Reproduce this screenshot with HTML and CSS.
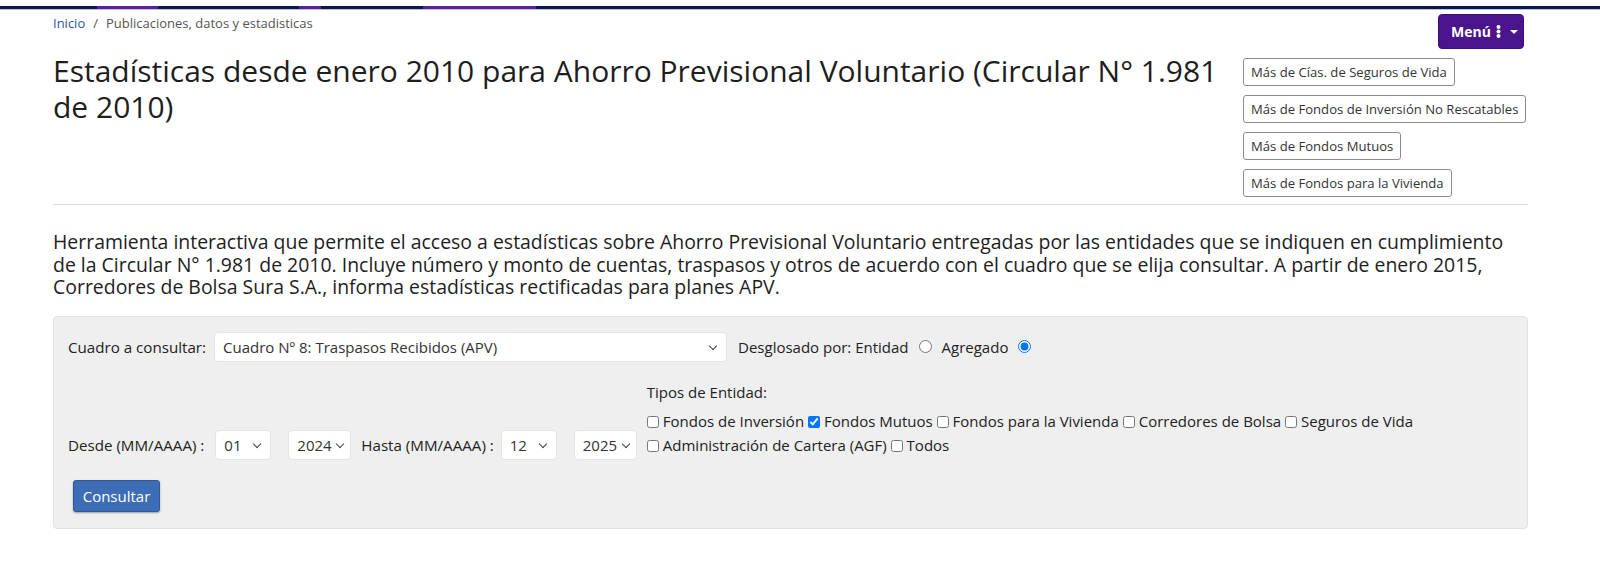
FILE: index.html
```html
<!DOCTYPE html>
<html lang="es">
<head>
<meta charset="utf-8">
<title>Estadísticas APV</title>
<link rel="stylesheet" href="styles.css">
</head>
<body>
<div class="topbar"><div class="topbar-line"></div></div>
<div class="page">
  <div class="top-row">
    <nav class="breadcrumb"><a href="#">Inicio</a><span class="sep">/</span><span>Publicaciones, datos y estadisticas</span></nav>
    <button class="menu-btn" type="button"><span class="menu-text">Menú</span><svg class="dots" width="5" height="13" viewBox="0 0 5 13"><circle cx="2.5" cy="2" r="2" fill="#fff"/><circle cx="2.5" cy="6.5" r="2" fill="#fff"/><circle cx="2.5" cy="11" r="2" fill="#fff"/></svg><span class="caret"></span></button>
  </div>
  <div class="header-row">
    <h1 class="title">Estadísticas desde enero 2010 para Ahorro Previsional Voluntario (Circular N° 1.981 de 2010)</h1>
    <div class="more-links">
      <button class="more-btn" type="button">Más de Cías. de Seguros de Vida</button>
      <button class="more-btn" type="button">Más de Fondos de Inversión No Rescatables</button>
      <button class="more-btn" type="button">Más de Fondos Mutuos</button>
      <button class="more-btn" type="button">Más de Fondos para la Vivienda</button>
    </div>
  </div>
  <hr class="divider">
  <p class="intro">Herramienta interactiva que permite el acceso a estadísticas sobre Ahorro Previsional Voluntario entregadas por las entidades que se indiquen en cumplimiento de la Circular N° 1.981 de 2010. Incluye número y monto de cuentas, traspasos y otros de acuerdo con el cuadro que se elija consultar. A partir de enero 2015, Corredores de Bolsa Sura S.A., informa estadísticas rectificadas para planes APV.</p>
  <form class="panel">
    <div class="row-1">
      <label class="lbl lbl-cuadro">Cuadro a consultar:</label>
      <span class="sel sel-cuadro"><select><option>Cuadro Nº 8: Traspasos Recibidos (APV)</option></select></span>
      <span class="desglose">Desglosado por: Entidad<input type="radio" name="d" class="radio"><span>Agregado</span><input type="radio" name="d" class="radio" checked></span>
    </div>
    <div class="row-2">
      <div class="dates">
        <label class="lbl">Desde (MM/AAAA) :</label>
        <span class="sel sel-mm m-desde-mm"><select><option>01</option></select></span>
        <span class="sel sel-yy m-desde-yy"><select><option>2024</option></select></span>
        <label class="lbl m-hasta">Hasta (MM/AAAA) :</label>
        <span class="sel sel-mm m-hasta-mm"><select><option>12</option></select></span>
        <span class="sel sel-yy m-hasta-yy"><select><option>2025</option></select></span>
      </div>
      <div class="tipos">
        <div class="tipos-title">Tipos de Entidad:</div>
        <div class="checks"><span class="chk"><input type="checkbox"><label>Fondos de Inversión</label></span> <span class="chk"><input type="checkbox" checked><label>Fondos Mutuos</label></span> <span class="chk"><input type="checkbox"><label>Fondos para la Vivienda</label></span> <span class="chk"><input type="checkbox"><label>Corredores de Bolsa</label></span> <span class="chk"><input type="checkbox"><label>Seguros de Vida</label></span> <span class="chk"><input type="checkbox"><label>Administración de Cartera (AGF)</label></span> <span class="chk"><input type="checkbox"><label>Todos</label></span></div>
      </div>
    </div>
    <button class="btn-consultar" type="button">Consultar</button>
  </form>
</div>
</body>
</html>
```

FILE: styles.css
```css
* { box-sizing: border-box; }
html, body { margin: 0; padding: 0; background: #fff; }
body {
  font-family: "Open Sans", "Noto Sans", "Liberation Sans", sans-serif;
  color: #222;
  font-size: 15px;
}

.topbar { padding-top: 6px; }
.topbar-line {
  height: 4px;
  border-bottom: 1px solid #b9c3dc;
  background: linear-gradient(to right,
    #0b1848 0, #0b1848 97px,
    #5a1f9a 97px, #5a1f9a 158px,
    #0b1848 158px, #0b1848 299px,
    #5a1f9a 299px, #5a1f9a 321px,
    #0b1848 321px, #0b1848 423px,
    #5a1f9a 423px, #5a1f9a 536px,
    #0b1848 536px, #0b1848 100%);
}

.page { margin-left: 53px; width: 1475px; }

.top-row {
  display: flex;
  justify-content: space-between;
  align-items: flex-start;
  padding-top: 4px;
  height: 40px;
}
.breadcrumb { font-size: 13px; line-height: 19px; color: #555; }
.breadcrumb a { color: #2b5797; text-decoration: none; }
.breadcrumb .sep { margin: 0 8px 0 8px; color: #555; }

.menu-btn {
  display: flex;
  align-items: center;
  height: 35px;
  width: 86px;
  margin-right: 4px;
  padding: 0 0 0 12px;
  background: #4a148c;
  border: 1px solid #3d0f77;
  border-radius: 4px;
  color: #fff;
  font-family: "Open Sans", sans-serif;
  font-weight: 700;
  font-size: 14px;
}
.menu-text { margin-right: 5px; }
.dots { display: block; }
.caret {
  margin-left: 9px;
  width: 0; height: 0;
  border-left: 4px solid transparent;
  border-right: 4px solid transparent;
  border-top: 4px solid #fff;
}

.header-row { display: flex; align-items: flex-start; }
.title {
  flex: 0 0 1190px;
  margin: 0;
  padding: 3px 14px 0 0;
  font-size: 30px;
  font-weight: 400;
  line-height: 36px;
  color: #1e1e1e;
}
.more-links {
  display: flex;
  flex-direction: column;
  align-items: flex-start;
  gap: 9px;
  padding-top: 8px;
}
.more-btn {
  height: 28px;
  padding: 0 7px;
  background: #fff;
  border: 1px solid #8c8c8c;
  border-radius: 3px;
  font-family: "Open Sans", sans-serif;
  font-size: 13.1px;
  color: #333;
  white-space: nowrap;
}

.divider { margin: 7px 0 0 0; border: 0; border-top: 1px solid #dcdcdc; height: 0; }

.intro {
  margin: 26px 0 17px 0;
  font-size: 19.45px;
  line-height: 22.5px;
  color: #1e1e1e;
}

.panel {
  background: #efefef;
  border: 1px solid #e2e2e2;
  border-radius: 4px;
  padding: 15px 15px 16px 14px;
}
.row-1 { display: flex; align-items: center; height: 30px; }
.lbl { color: #222; white-space: nowrap; font-size: 15.15px; }
.lbl-cuadro { margin-right: 8px; }

.sel { position: relative; display: inline-block; height: 30px; }
.sel select {
  -webkit-appearance: none;
  appearance: none;
  width: 100%;
  height: 30px;
  padding: 0 0 0 8px;
  background: #fff;
  border: 1px solid #e4e4e4;
  border-radius: 4px;
  font-family: "Open Sans", sans-serif;
  font-size: 15px;
  color: #333;
}
.sel::after {
  content: "";
  position: absolute;
  right: 11px;
  top: 11px;
  width: 5px;
  height: 5px;
  border-right: 1.5px solid #444;
  border-bottom: 1.5px solid #444;
  transform: rotate(45deg);
  pointer-events: none;
}
.sel-cuadro { width: 513px; }
.sel-mm { width: 56px; }
.sel-yy { width: 63px; }
.sel-yy::after { right: 8px; }

.desglose { display: flex; align-items: center; margin-left: 11px; white-space: nowrap; }
.radio { width: 13px; height: 13px; margin: 0 10px; }

.row-2 { display: flex; align-items: flex-end; margin-top: 20px; }
.dates { display: flex; align-items: center; }
.m-desde-mm { margin-left: 11px; }
.m-desde-yy { margin-left: 17px; }
.m-hasta { margin-left: 10px; }
.m-hasta-mm { margin-left: 7px; }
.m-hasta-yy { margin-left: 17px; }

.tipos { margin-left: 10px; padding-bottom: 3px; flex: 1; }
.tipos-title { line-height: 20px; margin-bottom: 7px; }
.checks { line-height: 24px; }
.chk { white-space: nowrap; }
.chk input { width: 12px; height: 12px; margin: 0 4px 0 0; vertical-align: -1px; }

.btn-consultar {
  display: block;
  margin: 20px 0 0 5px;
  width: 87px;
  height: 32px;
  padding: 0;
  background: #3d6db5;
  border: 1px solid #30599a;
  border-radius: 3px;
  box-shadow: 0 1px 2px rgba(0,0,0,.35);
  color: #fff;
  font-family: "Open Sans", sans-serif;
  font-size: 15px;
}
```
